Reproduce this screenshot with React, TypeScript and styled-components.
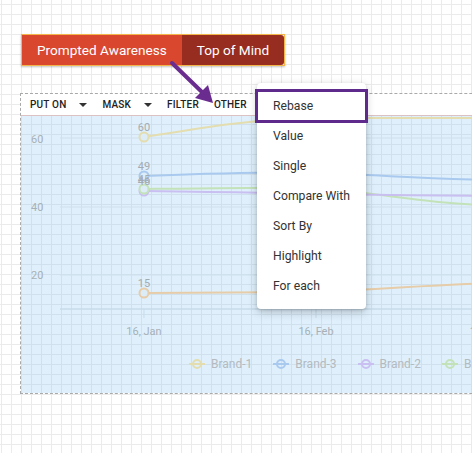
import React from "react"
import styled, { createGlobalStyle } from "styled-components"

const GlobalStyle = createGlobalStyle`
    html, body {
        margin: 0;
        padding: 0;
        height: 100%;
        overflow: hidden;
    }
    body {
        font-family: Roboto, "Liberation Sans", Arial, sans-serif;
        background-color: #fff;
        background-image:
            linear-gradient(to right, #ebebeb 1px, transparent 1px),
            linear-gradient(to bottom, #ebebeb 1px, transparent 1px);
        background-size: 10px 10px;
        background-position: 1px 4px;
    }
`

const Page = styled.div`
    position: relative;
    width: 472px;
    height: 453px;
    padding: 34px 0 0 20px;
    box-sizing: border-box;
    display: flex;
    flex-direction: column;
    align-items: flex-start;
`

const TabBar = styled.div`
    display: flex;
    margin-left: 1px;
    border: 1px solid #f2b64a;
    box-shadow: 0 1px 2px rgba(0, 0, 0, 0.25);
`

const Tab = styled.div<{ $active?: boolean }>`
    height: 30px;
    padding: 0 15px;
    display: flex;
    align-items: center;
    color: #fff;
    font-size: 13.6px;
    background: ${(p) => (p.$active ? "#d9472f" : "#972d21")};
    border-radius: ${(p) => (p.$active ? "0" : "0 3px 3px 0")};
`

const Panel = styled.div`
    margin-top: 27px;
    width: 640px;
    flex-shrink: 0;
    border: 1px dashed #a9a9a9;
    display: flex;
    flex-direction: column;
`

const Toolbar = styled.div`
    height: 21px;
    background: #fff;
    border-bottom: 1px solid #dcc2c2;
    display: flex;
    align-items: center;
    padding-left: 9px;
    gap: 15px;
`

const ToolItem = styled.div`
    display: flex;
    align-items: center;
    gap: 13px;
    font-size: 10px;
    font-weight: 500;
    letter-spacing: 0.2px;
    color: #222;
`

const Caret = styled.span`
    width: 0;
    height: 0;
    border-left: 4px solid transparent;
    border-right: 4px solid transparent;
    border-top: 4px solid #333;
`

const ChartArea = styled.div`
    height: 277px;
    background: rgba(127, 195, 243, 0.25);
    display: flex;
    flex-direction: column;
`

const Legend = styled.div`
    height: 32px;
    display: flex;
    align-items: center;
    padding-left: 168px;
    gap: 21px;
`

const LegendItem = styled.div<{ $color: string }>`
    display: flex;
    align-items: center;
    gap: 6px;
    font-size: 12px;
    color: #b3bac0;
    svg {
        stroke: ${(p) => p.$color};
    }
`

const Menu = styled.div`
    position: absolute;
    left: 257px;
    top: 83px;
    width: 109px;
    padding: 8px 0 8px;
    background: #fff;
    border-radius: 4px;
    box-shadow: 0 3px 10px rgba(0, 0, 0, 0.22), 0 1px 3px rgba(0, 0, 0, 0.12);
`

const MenuItem = styled.div<{ $selected?: boolean }>`
    height: 30px;
    display: flex;
    align-items: center;
    padding-left: 16px;
    font-size: 12.2px;
    color: #333;
    outline: ${(p) => (p.$selected ? "3px solid #5e2a8b" : "none")};
    outline-offset: -1px;
`

const Arrow = styled.svg`
    position: absolute;
    left: 160px;
    top: 55px;
    overflow: visible;
`

const series = [
    { name: "Brand-1", color: "#e3ddb0" },
    { name: "Brand-3", color: "#a9c9ee" },
    { name: "Brand-2", color: "#c9bff0" },
    { name: "Brand-4", color: "#c3e2b9" },
]

const menuItems = ["Rebase", "Value", "Single", "Compare With", "Sort By", "Highlight", "For each"]

const Chart = () => {
    const grid = [138, 207, 275]
    const labelColor = "#a7b0b7"
    return (
        <svg width={638} height={232}>
            <g transform="translate(-21,-116)">
                {grid.map((y) => (
                    <line key={y} x1={60} x2={660} y1={y} y2={y} stroke="#cfe0ec" strokeWidth={1} />
                ))}
                <line x1={60} x2={660} y1={309} y2={309} stroke="#c6dbea" strokeWidth={1.5} />
                {[144, 316, 488].map((x) => (
                    <line key={x} x1={x} x2={x} y1={309} y2={318} stroke="#c6dbea" />
                ))}
                <g fontSize={11} fill={labelColor}>
                    <text x={31} y={143}>60</text>
                    <text x={31} y={211}>40</text>
                    <text x={31} y={279}>20</text>
                    <text x={144} y={335} textAnchor="middle">16, Jan</text>
                    <text x={316} y={335} textAnchor="middle">16, Feb</text>
                    <text x={488} y={335} textAnchor="middle">16, Mar</text>
                </g>
                <g fill="none" strokeWidth={2}>
                    <path d="M144,137 C200,128 250,119 316,118 L520,118" stroke="#e3ddb0" />
                    <path d="M144,176 C220,173 290,172 316,173 C380,175 430,179 520,181" stroke="#a9c9ee" />
                    <path d="M144,189 C220,188 290,187 316,188 C380,192 420,205 520,206" stroke="#c3e2b9" />
                    <path d="M144,191 C220,192 290,193 316,194 C380,195 430,196 520,196" stroke="#c9bff0" />
                    <path d="M144,293 C220,293 290,292 316,292 C400,288 450,284 520,282" stroke="#e6cca8" />
                </g>
                <g fill="#dcedf8" strokeWidth={2}>
                    <circle cx={144} cy={137} r={4.5} stroke="#e3ddb0" />
                    <circle cx={144} cy={176} r={4.5} stroke="#a9c9ee" />
                    <circle cx={144} cy={191} r={4.5} stroke="#c9bff0" />
                    <circle cx={144} cy={189} r={4.5} stroke="#c3e2b9" />
                    <circle cx={144} cy={293} r={4.5} stroke="#e6cca8" />
                </g>
                <g fontSize={11} fill="#a3abb2" textAnchor="middle">
                    <text x={144} y={131}>60</text>
                    <text x={144} y={170}>49</text>
                    <text x={144} y={183}>45</text>
                    <text x={144} y={185}>46</text>
                    <text x={144} y={287}>15</text>
                </g>
            </g>
        </svg>
    )
}

const LegendIcon = () => (
    <svg width={16} height={10} fill="none" strokeWidth={2}>
        <line x1={0} x2={16} y1={5} y2={5} />
        <circle cx={8} cy={5} r={4} />
    </svg>
)

export default function App() {
    return (
        <>
            <GlobalStyle />
            <Page>
                <TabBar>
                    <Tab $active>Prompted Awareness</Tab>
                    <Tab>Top of Mind</Tab>
                </TabBar>
                <Panel>
                    <Toolbar>
                        <ToolItem>
                            PUT ON <Caret />
                        </ToolItem>
                        <ToolItem>
                            MASK <Caret />
                        </ToolItem>
                        <ToolItem>FILTER</ToolItem>
                        <ToolItem>OTHER</ToolItem>
                    </Toolbar>
                    <ChartArea>
                        <Chart />
                        <Legend>
                            {series.map((s) => (
                                <LegendItem key={s.name} $color={s.color}>
                                    <LegendIcon />
                                    {s.name}
                                </LegendItem>
                            ))}
                        </Legend>
                    </ChartArea>
                </Panel>
                <Arrow width={60} height={55}>
                    <line x1={12} y1={8} x2={44} y2={39} stroke="#6a2c8f" strokeWidth={4} strokeLinecap="round" />
                    <polygon points="53,48 35,43 48,30" fill="#6a2c8f" />
                </Arrow>
                <Menu>
                    {menuItems.map((m, i) => (
                        <MenuItem key={m} $selected={i === 0}>
                            {m}
                        </MenuItem>
                    ))}
                </Menu>
            </Page>
        </>
    )
}
